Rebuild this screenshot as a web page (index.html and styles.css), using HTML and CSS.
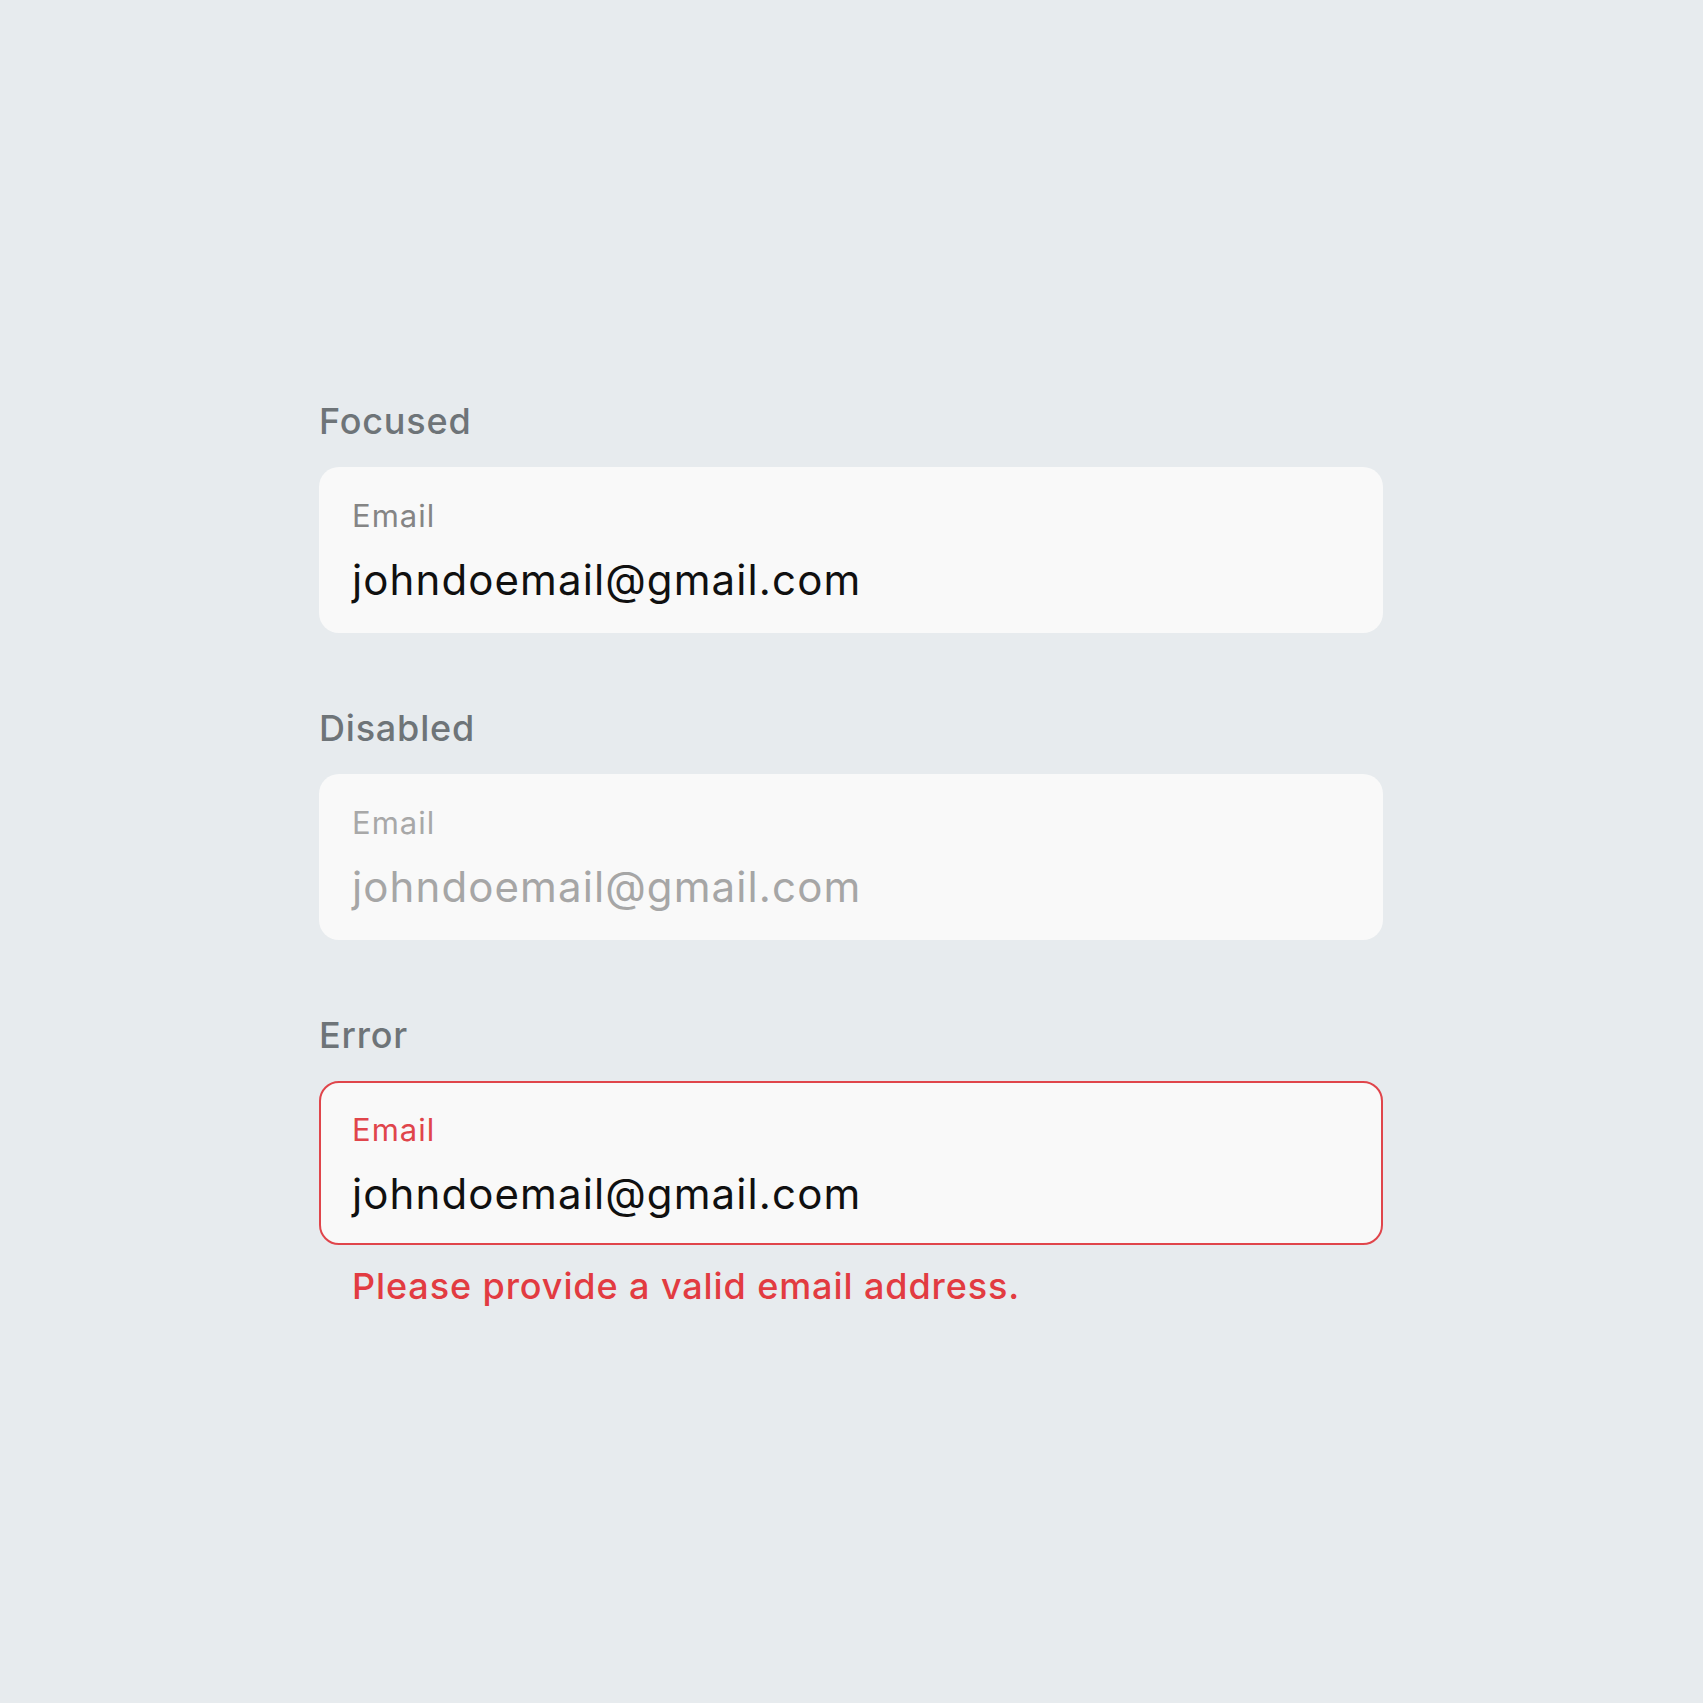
FILE: index.html
```html
<!DOCTYPE html>
<html lang="en">
<head>
<meta charset="utf-8">
<title>Email field states</title>
<link rel="stylesheet" href="styles.css">
</head>
<body>
<main class="page">
  <section class="group">
    <div class="section-label">Focused</div>
    <div class="field">
      <div class="field-label">Email</div>
      <div class="field-value">johndoemail@gmail.com</div>
    </div>
  </section>
  <section class="group">
    <div class="section-label">Disabled</div>
    <div class="field field--disabled">
      <div class="field-label">Email</div>
      <div class="field-value">johndoemail@gmail.com</div>
    </div>
  </section>
  <section class="group">
    <div class="section-label">Error</div>
    <div class="field field--error">
      <div class="field-label">Email</div>
      <div class="field-value">johndoemail@gmail.com</div>
    </div>
    <div class="error-text">Please provide a valid email address.</div>
  </section>
</main>
</body>
</html>
```

FILE: styles.css
```css
html, body {
  margin: 0;
  padding: 0;
  background: #e7ebee;
}

body {
  font-family: Inter, "Open Sans", sans-serif;
  width: 1703px;
  height: 1703px;
}

.page {
  display: flex;
  flex-direction: column;
  gap: 75px;
  padding: 401px 320px 0 319px;
}

.group {
  display: flex;
  flex-direction: column;
}

.section-label {
  font-size: 36px;
  font-weight: 500;
  line-height: 40px;
  letter-spacing: 0.8px;
  color: #6e7478;
  margin-bottom: 26px;
}

.field {
  box-sizing: border-box;
  height: 166px;
  border-radius: 20px;
  background: #f9f9f9;
  padding: 32px 33px 0;
  display: flex;
  flex-direction: column;
  gap: 22px;
}

.field-label {
  font-size: 31px;
  line-height: 34px;
  letter-spacing: 1px;
  color: #858585;
}

.field-value {
  font-size: 42px;
  line-height: 50px;
  color: #101010;
  letter-spacing: 1.1px;
}

.field--disabled .field-label {
  color: #a8a8a8;
}

.field--disabled .field-value {
  color: #a6a6a6;
}

.field--error {
  border: 2px solid #e0454b;
  padding: 30px 31px 0;
  height: 164px;
}

.field--error .field-label {
  color: #e0454b;
}

.error-text {
  margin-top: 19px;
  padding-left: 33px;
  font-size: 36px;
  font-weight: 500;
  line-height: 44px;
  letter-spacing: 0.9px;
  color: #e23b41;
}
```
